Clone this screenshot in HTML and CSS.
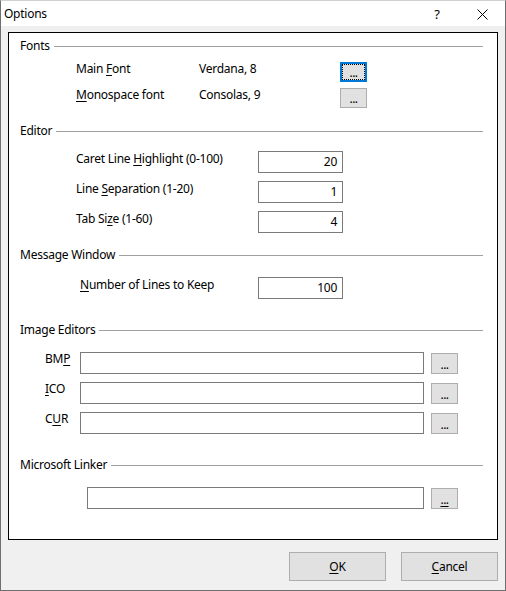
FILE: index.html
```html
<!DOCTYPE html>
<html>
<head>
<meta charset="utf-8">
<link rel="stylesheet" href="styles.css">
</head>
<body>
<div class="window">
  <div class="titlebar">
    <span class="title">Options</span>
    <span class="help">?</span>
    <span class="close"><svg width="11" height="11" viewBox="0 0 11 11"><path d="M0.5 0.5L10.5 10.5M10.5 0.5L0.5 10.5" stroke="#000" stroke-width="1" fill="none"/></svg></span>
  </div>
  <div class="client">
    <div class="panel">
      <div class="group-header"><span>Fonts</span><i class="rule"></i></div>
      <div class="font-rows">
        <div class="font-row">
          <span class="label">Main <u>F</u>ont</span>
          <span class="value">Verdana, 8</span>
          <button class="dots focused"><span>...</span></button>
        </div>
        <div class="font-row">
          <span class="label"><u>M</u>onospace font</span>
          <span class="value">Consolas, 9</span>
          <button class="dots"><span>...</span></button>
        </div>
      </div>

      <div class="group-header sec-editor"><span>Editor</span><i class="rule"></i></div>
      <div class="num-rows editor-rows">
        <div class="num-row">
          <span class="label">Caret Line <u>H</u>ighlight (0-100)</span>
          <div class="field num">20</div>
        </div>
        <div class="num-row">
          <span class="label">Line <u>S</u>eparation (1-20)</span>
          <div class="field num">1</div>
        </div>
        <div class="num-row">
          <span class="label">Tab Si<u>z</u>e (1-60)</span>
          <div class="field num">4</div>
        </div>
      </div>

      <div class="group-header sec-msg"><span>Message Window</span><i class="rule"></i></div>
      <div class="num-rows msg-rows">
        <div class="num-row">
          <span class="label"><u>N</u>umber of Lines to Keep</span>
          <div class="field num">100</div>
        </div>
      </div>

      <div class="group-header sec-img"><span>Image Editors</span><i class="rule"></i></div>
      <div class="path-rows img-rows">
        <div class="path-row">
          <span class="label">BM<u>P</u></span>
          <div class="field path"></div>
          <button class="dots"><span>...</span></button>
        </div>
        <div class="path-row">
          <span class="label"><u>I</u>CO</span>
          <div class="field path"></div>
          <button class="dots"><span>...</span></button>
        </div>
        <div class="path-row">
          <span class="label">C<u>U</u>R</span>
          <div class="field path"></div>
          <button class="dots"><span>...</span></button>
        </div>
      </div>

      <div class="group-header sec-link"><span>Microsoft Linker</span><i class="rule"></i></div>
      <div class="path-rows link-rows">
        <div class="path-row">
          <div class="field path"></div>
          <button class="dots"><span><u>...</u></span></button>
        </div>
      </div>
    </div>
    <div class="actions">
      <button class="btn"><u>O</u>K</button>
      <button class="btn"><u>C</u>ancel</button>
    </div>
  </div>
</div>
</body>
</html>
```

FILE: styles.css
```css
* { box-sizing: border-box; }

html, body {
  margin: 0;
  padding: 0;
  background: #ffffff;
}

body {
  font-family: "Segoe UI", "Noto Sans", "Liberation Sans", sans-serif;
  font-size: 12px;
  line-height: 16px;
  letter-spacing: -0.25px;
  color: #000;
}

u { text-decoration: underline; text-underline-offset: 2px; }

.window {
  width: 506px;
  height: 591px;
  border: 1px solid #6f6f6f;
  border-top-color: #d0d0d0;
  display: flex;
  flex-direction: column;
  background: #f0f0f0;
}

.titlebar {
  height: 25px;
  background: #ffffff;
  display: flex;
  align-items: center;
  padding-left: 3px;
  flex-shrink: 0;
}

.title {
  flex: 1;
  font-size: 12px;
}

.help {
  width: 10px;
  text-align: center;
  font-size: 13px;
  margin-right: 35px;
}

.close {
  width: 11px;
  height: 11px;
  display: flex;
  margin-right: 17px;
  margin-top: 1px;
}

.client {
  flex: 1;
  padding: 6px 7px 0 7px;
  display: flex;
  flex-direction: column;
}

.panel {
  height: 508px;
  background: #ffffff;
  border: 1px solid #000000;
  padding: 4px 14px 0 0;
}

.group-header {
  display: flex;
  align-items: center;
  height: 16px;
  padding-left: 11px;
  margin-top: 1px;
}

.group-header .rule {
  flex: 1;
  height: 1px;
  background: #a0a0a0;
  margin-left: 4px;
  margin-top: 1px;
}

.sec-editor { margin-top: 15px; }
.sec-msg { margin-top: 14px; }
.sec-img { margin-top: 23px; }
.sec-link { margin-top: 23px; }

.label {
  white-space: nowrap;
}

/* Fonts */
.font-rows {
  margin-top: 8px;
  padding-left: 67px;
  display: flex;
  flex-direction: column;
  gap: 6px;
}

.font-row {
  display: grid;
  grid-template-columns: 123px 141px 27px;
  height: 20px;
  align-items: start;
}

.font-row .label,
.font-row .value {
  margin-top: -1px;
}

/* buttons with dots */
.dots {
  width: 27px;
  height: 21px;
  padding: 0;
  margin: 0;
  background: #e1e1e1;
  border: 1px solid #adadad;
  font-family: inherit;
  font-size: 12px;
  line-height: 12px;
  color: #000;
  display: flex;
  align-items: center;
  justify-content: center;
  position: relative;
}

.font-row .dots { height: 20px; }

.dots span {
  display: block;
  margin-top: 2px;
  letter-spacing: -0.5px;
}

.dots.focused {
  border: 2px solid #0078d7;
}

.dots.focused::before {
  content: "";
  position: absolute;
  left: 0;
  top: 0;
  right: 0;
  bottom: 0;
  border: 1px dotted #000;
}

/* numeric rows */
.num-rows {
  display: flex;
  flex-direction: column;
  gap: 8px;
}

.editor-rows { margin-top: 12px; padding-left: 67px; }
.editor-rows .label { width: 182px; }
.msg-rows { margin-top: 14px; padding-left: 71px; }
.msg-rows .label { width: 178px; }

.num-row {
  display: flex;
  align-items: flex-start;
  height: 22px;
}

.field {
  height: 22px;
  background: #ffffff;
  border: 1px solid #7a7a7a;
}

.field.num {
  width: 85px;
  text-align: right;
  padding-right: 5px;
  line-height: 19px;
}

/* path rows */
.path-rows {
  display: flex;
  flex-direction: column;
  gap: 8px;
}

.img-rows { margin-top: 14px; padding-left: 36px; }
.img-rows .label { width: 35px; margin-top: -1px; }
.img-rows .field.path { width: 344px; }

.link-rows { margin-top: 14px; padding-left: 78px; }
.link-rows .field.path { width: 337px; }

.path-row {
  display: flex;
  align-items: flex-start;
  height: 22px;
}

.path-row .dots {
  margin-left: 7px;
  margin-top: 1px;
}

/* bottom buttons */
.actions {
  display: flex;
  justify-content: flex-end;
  gap: 15px;
  margin-top: 12px;
}

.btn {
  width: 97px;
  height: 29px;
  background: #e1e1e1;
  border: 1px solid #adadad;
  font-family: inherit;
  font-size: 12px;
  letter-spacing: -0.25px;
  color: #000;
  padding: 0;
  margin: 0;
}
```
